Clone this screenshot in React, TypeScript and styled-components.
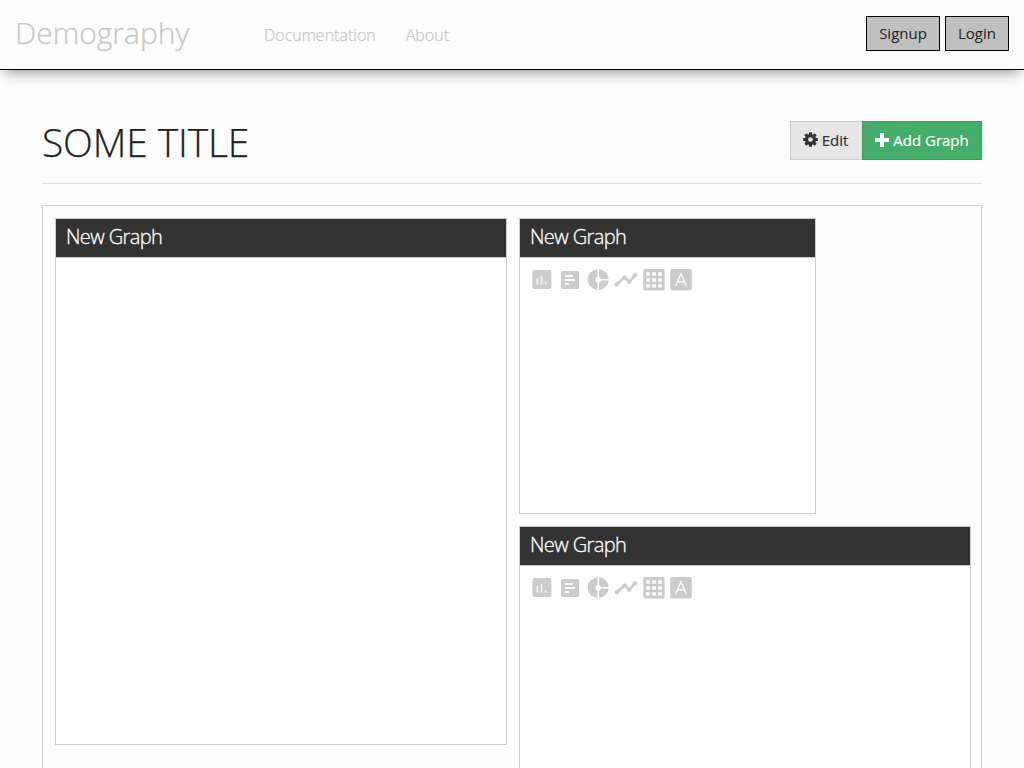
import React from "react";
import styled, { createGlobalStyle } from "styled-components";

const Global = createGlobalStyle`
  * { box-sizing: border-box; }
  html, body { margin: 0; height: 768px; overflow: hidden; }
  body { background: #fdfdfd; color: #222; font-family: "Open Sans", sans-serif; }
`;

const Navbar = styled.nav`
  display: flex;
  align-items: flex-start;
  height: 70px;
  padding: 0 15px;
  border-bottom: 1px solid #000;
  box-shadow: 0 8px 12px -5px #999;
`;

const Brand = styled.a`
  width: 234px;
  color: #c8c8c8;
  font-size: 30px;
  font-weight: 300;
  line-height: 66px;
  -webkit-text-stroke: 0.25px #c8c8c8;
`;

const NavLink = styled.a`
  padding: 0 15px;
  color: #c8c8c8;
  font-size: 16px;
  font-weight: 300;
  line-height: 70px;
  -webkit-text-stroke: 0.25px #c8c8c8;
`;

const AuthButtons = styled.div`
  display: flex;
  gap: 5px;
  margin-left: auto;
  padding-top: 16px;
`;

const AuthButton = styled.button<{ $width: number }>`
  width: ${(p) => p.$width}px;
  height: 35px;
  padding: 0;
  border: 1px solid #000;
  background: #c0c0c0;
  color: #222;
  font: 400 15px/33px "Open Sans", sans-serif;
`;

const Main = styled.main`
  height: 698px;
  overflow: hidden;
  padding: 51px 42px 0;
`;

const TitleBar = styled.header`
  display: flex;
  justify-content: space-between;
  height: 63px;
  border-bottom: 1px solid #ddd;
`;

const Title = styled.h1`
  margin: 0;
  font-size: 39px;
  font-weight: 300;
  line-height: 41px;
  letter-spacing: -0.15px;
  -webkit-text-stroke: 0.25px #222;
`;

const Actions = styled.div`
  display: flex;
`;

const ActionButton = styled.button<{ $primary?: boolean; $width: number }>`
  display: flex;
  align-items: center;
  justify-content: center;
  gap: 4px;
  width: ${(p) => p.$width}px;
  height: 39px;
  padding: ${(p) => (p.$primary ? "0" : "0 2px 0 0")};
  border: 1px solid ${(p) => (p.$primary ? "#3c9a5f" : "#ccc")};
  ${(p) => !p.$primary && "border-right: 0;"}
  background: ${(p) => (p.$primary ? "#45ae6b" : "#e6e6e6")};
  color: ${(p) => (p.$primary ? "#fff" : "#333")};
  font: 400 15px/37px "Open Sans", sans-serif;
  -webkit-text-stroke: 0.2px currentColor;
  svg { display: block; flex: none; margin-top: -2px; }
`;

const Board = styled.section`
  display: flex;
  align-items: flex-start;
  gap: 12px;
  height: 620px;
  margin-top: 21px;
  padding: 12px 0 12px 12px;
  border: 1px solid #ccc;
`;

const Column = styled.div`
  display: flex;
  flex-direction: column;
  gap: 12px;
`;

const Panel = styled.article<{ $width: number; $height: number }>`
  flex: none;
  width: ${(p) => p.$width}px;
  height: ${(p) => p.$height}px;
  border: 1px solid #ccc;
  background: #fff;
`;

const PanelHeader = styled.h2`
  height: 39px;
  margin: 0;
  padding: 0 10px;
  border-bottom: 1px solid #ccc;
  background: #333;
  color: #fff;
  font-size: 20px;
  font-weight: 300;
  line-height: 36px;
  letter-spacing: -0.6px;
  -webkit-text-stroke: 0.3px #fff;
`;

const Toolbar = styled.div`
  display: flex;
  padding: 10px 10px 0;
  svg { display: block; }
`;

const Icon = ({ children, width = 28 }: { children: React.ReactNode; width?: number }) => (
  <svg width={width} height="24" viewBox={`0 0 ${width} 24`} fill="#ccc">{children}</svg>
);

const ChartTools = () => (
  <Toolbar>
    <Icon>
      <rect x="2.4" y="2" width="19" height="19" rx="2" />
      <path fill="#f4f4f4" d="M6.5 10h1.7v6.5H6.5zM10.7 7.5h1.7v9h-1.7zM14.8 14h1.7v2.5h-1.7z" />
    </Icon>
    <Icon>
      <rect x="3" y="3" width="18" height="18" rx="1.5" />
      <path fill="#fff" d="M7 7h8v2H7zM7 11h10v2H7zM7 15h4v2H7z" />
    </Icon>
    <Icon>
      <circle cx="12.2" cy="11.7" r="10.5" />
      <path fill="#fff" d="M11.5 1H13v21h-1.5zM12 10.9h11v1.6H12z" />
      <circle cx="12.2" cy="11.7" r="2.8" fill="#fff" />
    </Icon>
    <Icon width={27}>
      <path d="M2.7 16.3 10.7 9.3l4.6 4.7L21 7" fill="none" stroke="#ccc" strokeWidth="2.7" />
      <circle cx="2.9" cy="16.2" r="2.2" /><circle cx="10.7" cy="9.5" r="2.1" />
      <circle cx="15.3" cy="13.8" r="2.1" /><circle cx="21" cy="7.2" r="2.2" />
    </Icon>
    <Icon>
      <rect x="2.3" y="1" width="21.4" height="21.4" rx="2" />
      <path fill="#fff" d="M5.2 4.2h3.6v3.6H5.2zm6 0h3.6v3.6h-3.6zm6 0h3.6v3.6h-3.6zM5.2 10.2h3.6v3.6H5.2zm6 0h3.6v3.6h-3.6zm6 0h3.6v3.6h-3.6zM5.2 16.2h3.6v3.4H5.2zm6 0h3.6v3.4h-3.6zm6 0h3.6v3.4h-3.6z" />
    </Icon>
    <Icon>
      <rect x="1.2" y="1" width="21.6" height="21.4" rx="2" />
      <path d="M6.7 18 12 5.8 17.3 18M8.8 13.8h6.4" fill="none" stroke="#fff" strokeWidth="1.3" />
    </Icon>
  </Toolbar>
);

const Cog = () => (
  <svg width="15" height="15" viewBox="-8 -8 16 16" fill="#333">
    {[0, 45, 90, 135].map((a) => (
      <rect key={a} x="-1.7" y="-7.8" width="3.4" height="15.6" rx="0.6" transform={`rotate(${a})`} />
    ))}
    <circle r="5.9" />
    <circle r="2.5" fill="#e6e6e6" />
  </svg>
);

const Plus = () => (
  <svg width="14" height="14" viewBox="0 0 14 14" fill="#fff">
    <path d="M5 0h4v5h5v4H9v5H5V9H0V5h5z" />
  </svg>
);

export default function App() {
  return (
    <>
      <Global />
      <Navbar>
        <Brand>Demography</Brand>
        <NavLink>Documentation</NavLink>
        <NavLink>About</NavLink>
        <AuthButtons>
          <AuthButton $width={74}>Signup</AuthButton>
          <AuthButton $width={64}>Login</AuthButton>
        </AuthButtons>
      </Navbar>
      <Main>
        <TitleBar>
          <Title>SOME TITLE</Title>
          <Actions>
            <ActionButton $width={72}><Cog />Edit</ActionButton>
            <ActionButton $primary $width={120}><Plus />Add Graph</ActionButton>
          </Actions>
        </TitleBar>
        <Board>
          <Panel $width={452} $height={527}>
            <PanelHeader>New Graph</PanelHeader>
          </Panel>
          <Column>
            <Panel $width={297} $height={296}>
              <PanelHeader>New Graph</PanelHeader>
              <ChartTools />
            </Panel>
            <Panel $width={452} $height={296}>
              <PanelHeader>New Graph</PanelHeader>
              <ChartTools />
            </Panel>
          </Column>
        </Board>
      </Main>
    </>
  );
}
